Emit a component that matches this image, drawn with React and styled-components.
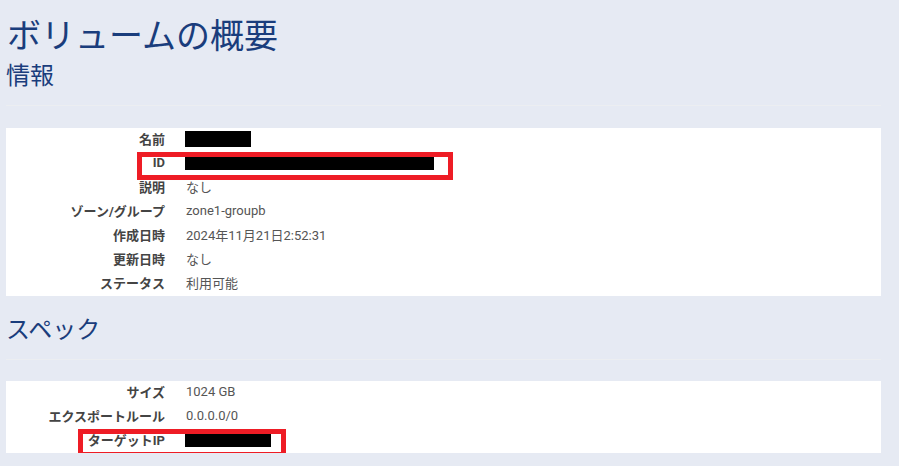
import React from "react";
import styled, { createGlobalStyle } from "styled-components";

const GlobalStyle = createGlobalStyle`
  html, body {
    margin: 0;
    padding: 0;
    background: #e6eaf3;
  }
  body {
    font-family: Roboto, "Noto Sans CJK JP", sans-serif;
  }
`;

const info = [
  { label: "名前", redact: 66, redactHeight: 16 },
  { label: "ID", redact: 249, highlight: { left: 131, width: 316 } },
  { label: "説明", value: "なし" },
  { label: "ゾーン/グループ", value: "zone1-groupb" },
  { label: "作成日時", value: "2024年11月21日2:52:31" },
  { label: "更新日時", value: "なし" },
  { label: "ステータス", value: "利用可能" },
];

const spec = [
  { label: "サイズ", value: "1024 GB" },
  { label: "エクスポートルール", value: "0.0.0.0/0" },
  { label: "ターゲットIP", redact: 86, highlight: { left: 72, width: 208 } },
];

const Page = styled.div`
  padding: 15px 18px 0 6px;
  color: #444;
`;

const Title = styled.h1`
  margin: 0 0 0 1px;
  font-family: "Noto Sans CJK JP", sans-serif;
  font-weight: 400;
  font-size: 34px;
  line-height: 38px;
  padding-bottom: 2px;
  color: #1a3d7c;
`;

const SectionTitle = styled.h2`
  margin: 0;
  font-family: "Noto Sans CJK JP", sans-serif;
  font-weight: 400;
  font-size: 24px;
  line-height: 30px;
  color: #1a3d7c;
  padding-top: ${(p) => p.$top}px;
  padding-bottom: 16px;
  border-bottom: 1px solid #eceef1;
  margin-bottom: ${(p) => p.$gap}px;
`;

const Panel = styled.div`
  background: #fff;
  padding: 0;
`;

const Row = styled.div`
  position: relative;
  display: grid;
  grid-template-columns: 159px 1fr;
  column-gap: 21px;
  align-items: center;
  box-sizing: border-box;
  height: 24px;
  padding-bottom: 3px;
  font-size: 13px;
`;

const Label = styled.span`
  text-align: right;
  font-weight: 700;
  color: #444;
  font-family: Roboto, "Noto Sans CJK JP", sans-serif;
`;

const Value = styled.span`
  color: #555;
  font-family: Roboto, "Noto Sans CJK JP", sans-serif;
`;

const Redacted = styled.span`
  display: block;
  background: #000;
  width: ${(p) => p.$w}px;
  height: ${(p) => p.$h}px;
  margin-left: -1px;
`;

const Highlight = styled.span`
  position: absolute;
  top: 0;
  height: 28px;
  box-sizing: border-box;
  border: 5px solid #ee1c25;
  pointer-events: none;
`;

const DetailRows = ({ rows }) =>
  rows.map((r) => (
    <Row key={r.label}>
      <Label>{r.label}</Label>
      {r.redact ? (
        <Redacted $w={r.redact} $h={r.redactHeight || 14} />
      ) : (
        <Value>{r.value}</Value>
      )}
      {r.highlight && (
        <Highlight
          style={{ left: r.highlight.left, width: r.highlight.width }}
        />
      )}
    </Row>
  ));

export default function App() {
  return (
    <>
      <GlobalStyle />
      <Page>
        <Title>ボリュームの概要</Title>
        <SectionTitle $top={4} $gap={22}>情報</SectionTitle>
        <Panel>
          <DetailRows rows={info} />
        </Panel>
        <SectionTitle $top={17} $gap={21}>スペック</SectionTitle>
        <Panel>
          <DetailRows rows={spec} />
        </Panel>
      </Page>
    </>
  );
}
